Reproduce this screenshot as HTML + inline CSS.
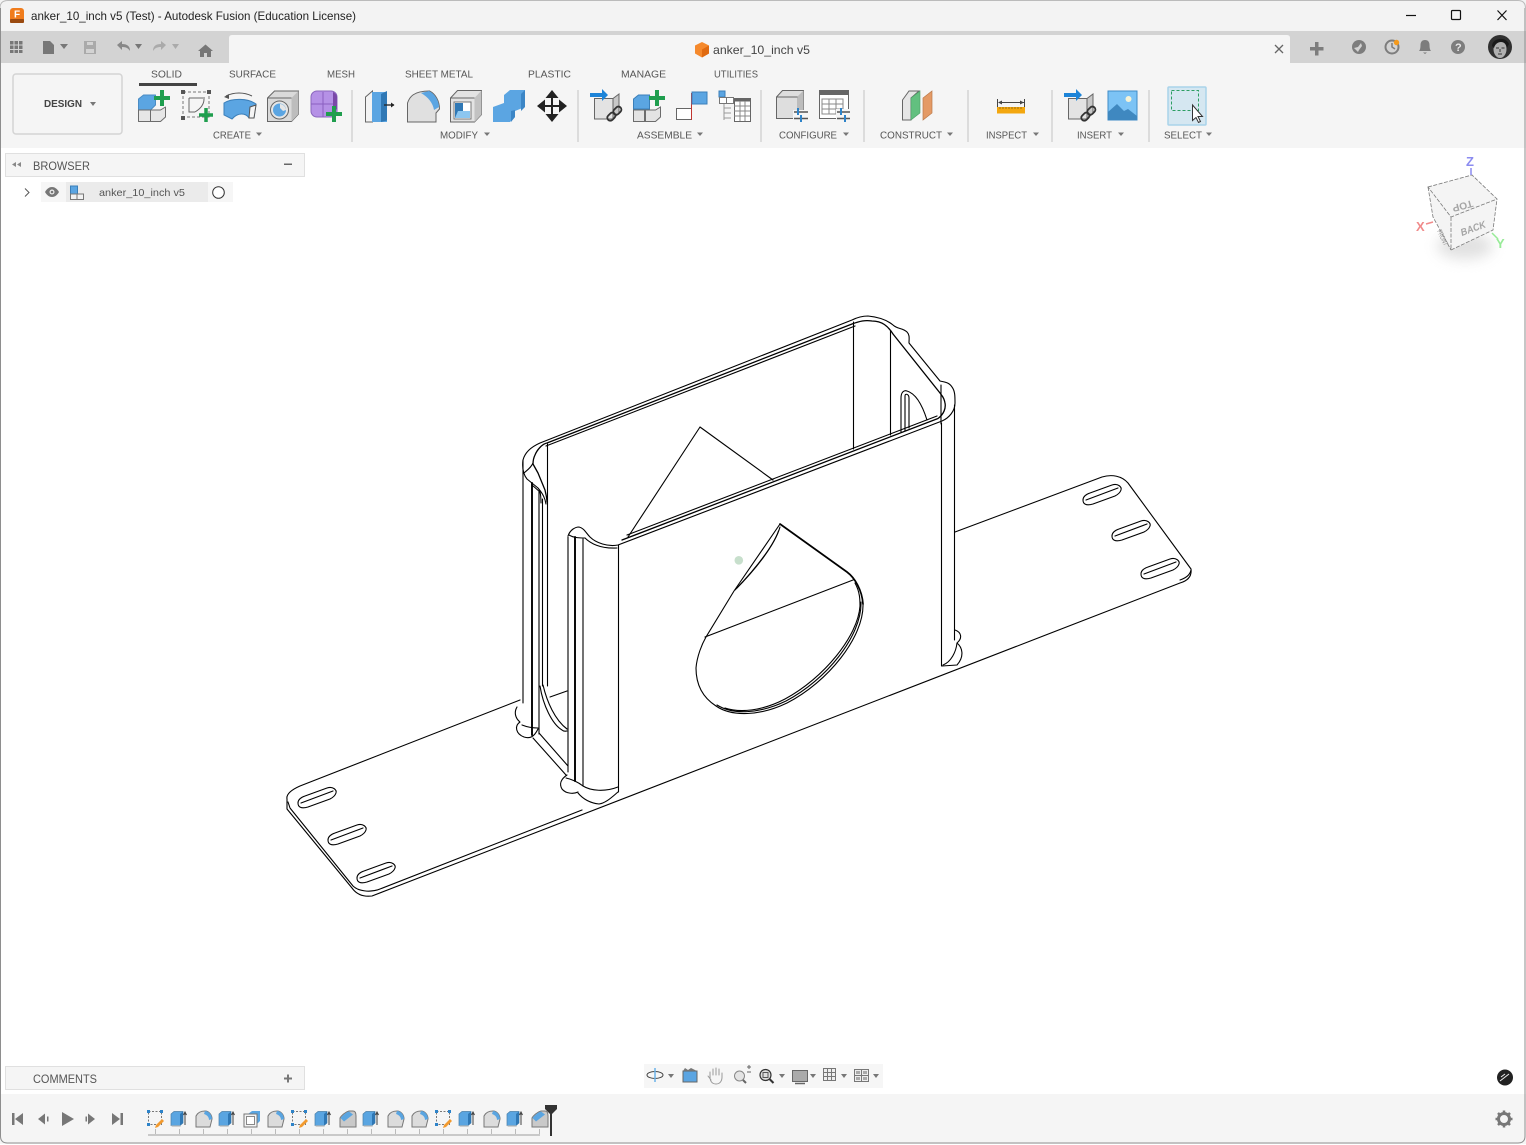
<!DOCTYPE html>
<html><head><meta charset="utf-8"><title>anker_10_inch v5</title>
<style>
html,body{margin:0;padding:0;background:#fff;width:1526px;height:1145px;overflow:hidden}
svg{position:absolute;left:0;top:0;display:block}
text{font-family:"Liberation Sans",sans-serif;fill:#555;font-size:10.5px}
.m path,.m line{fill:none;stroke:#000;stroke-width:1.1;stroke-linejoin:round;stroke-linecap:round}
.m .t{stroke-width:1.9}
.ic{stroke:#6c6c6c;stroke-width:1;stroke-linejoin:round}
</style></head><body>
<svg width="1526" height="1145" viewBox="0 0 1526 1145" xmlns="http://www.w3.org/2000/svg">
<defs>
<filter id="bl" x="-60%" y="-80%" width="220%" height="260%"><feGaussianBlur stdDeviation="7"/></filter>
<symbol id="plus" viewBox="0 0 16 16" overflow="visible"><path d="M6 0h4v6h6v4h-6v6H6v-6H0V6h6z" fill="#1f9e4e"/></symbol>
<symbol id="t-sk" viewBox="0 0 18 18" overflow="visible">
<rect x="1.5" y="1.5" width="13" height="13" fill="none" stroke="#777" stroke-dasharray="2 1.5"/>
<path d="M0 0h3v3H0zM13 0h3v3h-3zM0 13h3v3H0z" fill="#2d83c9"/>
<path d="M9 15l6-6 2 2-6 6-3 1z" fill="#f29a2e"/></symbol>
<symbol id="t-ex" viewBox="0 0 18 18" overflow="visible">
<path d="M1 4l3-2.500h9V13l-3 2.500H1z" fill="#5aa5e1" stroke="#4a7fa8" stroke-width=".7"/>
<path d="M10 4l3-2.500V13l-3 2.500z" fill="#2f78b5"/>
<path d="M1 15.500h9l1 1.500H2z" fill="#cfcfcf"/>
<path d="M15 15V3M13.500 5L15 2l1.500 3" stroke="#444" fill="none"/></symbol>
<symbol id="t-fi" viewBox="0 0 18 18" overflow="visible">
<path d="M1 17V6C3 2 7 1 10 1c4 0 7 4 7 8l-2 8z" fill="#dcdcdc" stroke="#777"/>
<path d="M10 1c4 0 7 4 7 8l-3 1C14 7 12 5 9 4z" fill="#5aa5e1"/></symbol>
<symbol id="t-ch" viewBox="0 0 18 18" overflow="visible">
<path d="M1 17V8C2 6 6 2 10 1h4c2 0 3 2 3 5v11z" fill="#c9c9c9" stroke="#777"/>
<path d="M1.500 8C3 6 7 2 10 1.500l4 3-9 7z" fill="#5aa5e1"/></symbol>
<symbol id="t-bx" viewBox="0 0 18 18" overflow="visible">
<path d="M5 4l4-3h8v10l-3 3z" fill="#5aa5e1"/>
<rect x="1" y="4" width="13" height="13" fill="#f4f4f4" stroke="#777"/>
<rect x="3.500" y="6.500" width="8" height="8" fill="#fff" stroke="#888"/></symbol>
</defs>

<!-- chrome backgrounds -->
<rect width="1526" height="1145" fill="#fff"/>
<rect width="1526" height="31" fill="#f3f3f3"/>
<rect y="31" width="1526" height="32" fill="#d3d3d3"/>
<path d="M229 63V38q0-3 3-3h1055q3 0 3 3v25z" fill="#f5f5f5"/>
<rect y="63" width="1526" height="85" fill="#f5f5f5"/>
<rect y="1094" width="1526" height="50" fill="#f5f5f5"/>
<path d="M.5 8V1136q0 7 7 7H1518q7 0 7-7V8" fill="none" stroke="#8e8e8e"/>
<path d="M0 8Q0 .5 8 .5H1518q7.500 0 7.500 8" fill="none" stroke="#bbb"/>

<!-- title bar -->
<rect x="10" y="8" width="14" height="15" rx="3" fill="#f07c1c"/>
<rect x="10" y="19" width="14" height="4" rx="1" fill="#9a4a10"/>
<text x="14" y="17.500" style="font-size:10px;font-weight:bold;fill:#fff">F</text>
<text x="31" y="20" style="font-size:12px;fill:#222" textLength="325" lengthAdjust="spacingAndGlyphs">anker_10_inch v5 (Test) - Autodesk Fusion (Education License)</text>
<path d="M1406 15.500h10" stroke="#111" stroke-width="1.200"/>
<rect x="1451.500" y="10.500" width="9" height="9" rx="1" fill="none" stroke="#111" stroke-width="1.200"/>
<path d="M1497.500 10.500l9 9.500M1506.500 10.500l-9 9.500" stroke="#111" stroke-width="1.200"/>

<!-- quick access bar -->
<g fill="#777">
<path d="M10 41h3.500v3.500H10zM14.500 41H18v3.500h-3.500zM19 41h3.500v3.500H19zM10 45.500h3.500V49H10zM14.500 45.500H18V49h-3.500zM19 45.500h3.500V49H19zM10 50h3.500v3H10zM14.500 50H18v3h-3.500zM19 50h3.500v3H19z"/>
<path d="M43 41h7l4 4v9H43z"/>
<path d="M60 44h8l-4 5z"/>
<path d="M84 41h12v13H84z" fill="#aaa"/>
<path d="M117 45l5-4v3c5 0 8 2 8 7-2-3-4-4-8-4v3z" fill="#888"/>
<path d="M135 44h7l-3.500 5z"/>
<path d="M166 45l-5-4v3c-5 0-8 2-8 7 2-3 4-4 8-4v3z" fill="#aaa"/>
<path d="M172 44h7l-3.500 5z" fill="#aaa"/>
<path d="M198 51l7.500-6.500L213 51h-2v6h-4v-4h-3v4h-4v-6z"/>
</g>
<rect x="87" y="42" width="6" height="3" fill="#d3d3d3"/><rect x="86" y="49" width="8" height="4" fill="#d3d3d3"/>

<!-- tab bar doc -->
<path d="M702 42l7 3.500v8l-7 4-7-4v-8z" fill="#f5892c"/>
<path d="M702 49.500l7-4v8l-7 4z" fill="#e06a10"/>
<text x="713" y="54" style="font-size:12px;fill:#444" textLength="97" lengthAdjust="spacingAndGlyphs">anker_10_inch v5</text>
<path d="M1275 45l8 8M1283 45l-8 8" stroke="#666" stroke-width="1.300"/>
<path d="M1315 42h3.500v5h5v3.500h-5v5H1315v-5h-5V47h5z" fill="#7d7d7d"/>
<circle cx="1359" cy="47" r="7" fill="#7d7d7d"/><path d="M1354 48l4-1 3-4 1 3-3 4-1 2z" fill="#d3d3d3"/>
<circle cx="1392" cy="47" r="6.500" fill="none" stroke="#7d7d7d" stroke-width="2"/><path d="M1392 43v4l3 2" stroke="#7d7d7d" stroke-width="1.500" fill="none"/><circle cx="1396.500" cy="42.500" r="2.700" fill="#f59a1c"/>
<path d="M1425 40c-3 0-4.500 2-4.500 5 0 3-.5 5-1.500 6h12c-1-1-1.500-3-1.500-6 0-3-1.500-5-4.500-5zM1423 52.500h4l-2 1.500z" fill="#7d7d7d"/>
<circle cx="1458" cy="47" r="7" fill="#7d7d7d"/>
<text x="1455" y="51" style="font-size:11px;font-weight:bold;fill:#e8e8e8">?</text>
<circle cx="1500" cy="47" r="12" fill="#303030"/>
<ellipse cx="1500" cy="49" rx="6.500" ry="9" fill="#b0b0b0"/>
<path d="M1492 46c0-8 14-10 17-2l-2 4c-1-4-3-6-6-6-3 0-6 2-7 6z" fill="#1a1a1a"/>
<path d="M1496 48h3M1501.500 48h3M1498 54h4M1500 49v3" stroke="#333"/>

<!-- design button -->
<rect x="13" y="74" width="109" height="60" rx="3" fill="#f5f5f5" stroke="#d4d4d4" stroke-width="1.500"/>
<text x="44" y="107" style="font-size:10.500px;font-weight:bold;fill:#444" textLength="38" lengthAdjust="spacingAndGlyphs">DESIGN</text>
<path d="M90 102h6l-3 4z" fill="#777"/>

<!-- tabs -->
<g>
<text x="151" y="77.500" textLength="31" lengthAdjust="spacingAndGlyphs">SOLID</text>
<text x="229" y="77.500" textLength="47" lengthAdjust="spacingAndGlyphs">SURFACE</text>
<text x="327" y="77.500" textLength="28" lengthAdjust="spacingAndGlyphs">MESH</text>
<text x="405" y="77.500" textLength="68" lengthAdjust="spacingAndGlyphs">SHEET METAL</text>
<text x="528" y="77.500" textLength="43" lengthAdjust="spacingAndGlyphs">PLASTIC</text>
<text x="621" y="77.500" textLength="45" lengthAdjust="spacingAndGlyphs">MANAGE</text>
<text x="714" y="77.500" textLength="44" lengthAdjust="spacingAndGlyphs">UTILITIES</text>
</g>
<rect x="139" y="83" width="58" height="3" fill="#444"/>

<!-- group labels -->
<g>
<text x="213" y="138.500" textLength="38" lengthAdjust="spacingAndGlyphs">CREATE</text>
<text x="440" y="138.500" textLength="38" lengthAdjust="spacingAndGlyphs">MODIFY</text>
<text x="637" y="138.500" textLength="55" lengthAdjust="spacingAndGlyphs">ASSEMBLE</text>
<text x="779" y="138.500" textLength="58" lengthAdjust="spacingAndGlyphs">CONFIGURE</text>
<text x="880" y="138.500" textLength="62" lengthAdjust="spacingAndGlyphs">CONSTRUCT</text>
<text x="986" y="138.500" textLength="41" lengthAdjust="spacingAndGlyphs">INSPECT</text>
<text x="1077" y="138.500" textLength="35" lengthAdjust="spacingAndGlyphs">INSERT</text>
<text x="1164" y="138.500" textLength="38" lengthAdjust="spacingAndGlyphs">SELECT</text>
</g>
<g fill="#777">
<path d="M256 132.500h6l-3 3.500zM484 132.500h6l-3 3.500zM697 132.500h6l-3 3.500zM843 132.500h6l-3 3.500zM947 132.500h6l-3 3.500zM1033 132.500h6l-3 3.500zM1118 132.500h6l-3 3.500zM1206 132.500h6l-3 3.500z"/>
</g>
<g fill="#dcdcdc">
<rect x="351" y="90" width="2" height="52"/><rect x="577" y="90" width="2" height="52"/><rect x="760" y="90" width="2" height="52"/><rect x="863" y="90" width="2" height="52"/><rect x="967" y="90" width="2" height="52"/><rect x="1051" y="90" width="2" height="52"/><rect x="1148" y="90" width="2" height="52"/>
</g>

<!-- CREATE icons -->
<g class="ic">
<path d="M138.500 99l5-4h12v10l-5 5h-12z" fill="#5ba5e2" stroke="#4a8cc4"/>
<path d="M138.500 110h12v11.500h-12z" fill="#e6e6e6"/><path d="M150.500 110h10l5-3v10l-5 4.500h-10z" fill="#e6e6e6"/>
</g>
<use href="#plus" x="154" y="90" width="16" height="16"/>
<path d="M183 92h26v25h-26z" fill="none" stroke="#777" stroke-dasharray="3 2"/>
<path d="M181 90h4v4h-4zM207 90h4v4h-4zM181 116h4v4h-4z" fill="#555"/>
<path d="M189 98h16M189 98v14h6M204 99c0 6-4 10-9 13" fill="none" stroke="#666"/>
<use href="#plus" x="199" y="108" width="14" height="14"/>
<path d="M224 103C232 98 248 98 256 104L254 118H249C246 113 238 112 232 119L224 115Z" fill="#5ba5e2" stroke="#3b7fb9"/>
<path d="M249 118h5l2-13-6 2z" fill="#f5f5f5" stroke="#555"/>
<path d="M226 96c8-4 18-4 26 0" fill="none" stroke="#555"/><path d="M224 97l5-3v5z" fill="#555"/>
<path d="M267.500 98l7-7h24v23l-7 7.500h-24z" fill="#dadada" stroke="#666"/>
<path d="M291.500 98l7-7v23l-7 7.500z" fill="#bdbdbd"/><path d="M267.500 98h24" stroke="#666"/>
<circle cx="279.500" cy="110" r="9" fill="#e6e6e6" stroke="#666"/>
<circle cx="279.500" cy="110" r="6.500" fill="#5ba5e2"/>
<path d="M280 104a6.500 6.500 0 0 1 6 6l-3 1-3-3z" fill="#e6e6e6"/>
<rect x="311" y="91" width="26" height="26" rx="6" fill="#b591e6" stroke="#8a66bd"/>
<path d="M323 92v25M311 104h24" stroke="#8a5fc0"/>
<path d="M333 92c2 1 4 3 4 5v12l-4 3z" fill="#7a48a8"/>
<use href="#plus" x="326" y="106" width="16" height="16"/>

<!-- MODIFY icons -->
<path d="M365.500 97l7-6v31h-7z" fill="#f3f3f3" stroke="#666"/>
<path d="M372 92h15v30h-15z" fill="#5ba5e2"/><path d="M381 122l6-1.500V91l-6 3z" fill="#2f78b5"/>
<path d="M384 105h10" stroke="#222" stroke-width="1.300"/><path d="M391 102.500l3.500 2.500-3.500 2.500z" fill="#222"/>
<path d="M407.500 122V103c2-6 6-12 22-12 6 3 10 10 10 18l-3.500 4v9z" fill="#e0e0e0" stroke="#666"/>
<path d="M421 93l8-2c6 3 10 10 10 16l-5 3c-1-7-6-13-13-17z" fill="#5ba5e2"/>
<path d="M450.500 98l7-7.500h24v24l-7 7.500h-24z" fill="#e3e3e3" stroke="#666"/>
<path d="M474.500 98l7-7.500v24l-7 7.500z" fill="#c2c2c2"/><path d="M450.500 98h24" stroke="#666"/>
<rect x="454" y="102" width="17" height="17" fill="#fff" stroke="#777"/>
<path d="M455 103h8v8h7v7h-15z" fill="#2f78b5"/><path d="M458 111h12v7h-15z" fill="#8cc6f0"/>
<path d="M493 107L504 103V95L510 90H525V107L515 111V117L510 122H493Z" fill="#5ba5e2"/>
<path d="M521 94l4-4v17l-4 4zM511 111l4-1v7l-4 5z" fill="#3c86c6"/>
<path d="M552 94V118M541 106H563" stroke="#222" stroke-width="2"/>
<path d="M552 90l6.500 8h-13zM552 122l6.500-8h-13zM537 106l8-6.500v13zM567 106l-8-6.500v13z" fill="#222"/>

<!-- ASSEMBLE icons -->
<path d="M594.500 98.500H613V119H594.500Z" fill="#e3e3e3" stroke="#666"/>
<path d="M613 98.500l6-4.500V113l-6 6z" fill="#c8c8c8" stroke="#666"/>
<path d="M590 93h12v-4l6 6-6 6v-4h-12z" fill="#1d84d8"/>
<g fill="none" stroke="#333" stroke-width="1.800"><rect x="607" y="114" width="9" height="6" rx="3" transform="rotate(-45 611 117)"/><rect x="613" y="108" width="9" height="6" rx="3" transform="rotate(-45 617 111)"/></g>
<path d="M633.500 99l5-4h11v14h-16z" fill="#5ba5e2" stroke="#3b7fb9"/><path d="M633.500 110h11v11.500h-11z" fill="#e3e3e3" stroke="#6c6c6c"/><path d="M645.500 110h10l5-3v10l-5 4.500h-10z" fill="#e3e3e3" stroke="#6c6c6c"/>
<use href="#plus" x="649" y="90" width="16" height="16"/>
<rect x="676.500" y="108.500" width="15" height="11" fill="#fff" stroke="#666"/><path d="M691.500 93v27" stroke="#c0352f"/><rect x="692" y="92" width="15" height="12" fill="#5ba5e2" stroke="#3b7fb9"/>
<rect x="719" y="91" width="6" height="6" fill="#5ba5e2" stroke="#3b7fb9"/><rect x="719.500" y="97.500" width="7" height="6" fill="#fff" stroke="#777"/><rect x="726.500" y="97.500" width="7" height="6" fill="#fff" stroke="#777"/>
<path d="M724 104v16M724 108h7M724 113h7M724 118h7" stroke="#999" fill="none"/>
<rect x="734.500" y="98.500" width="16" height="23" fill="#fff" stroke="#666"/><rect x="734" y="98" width="17" height="3.500" fill="#666"/><path d="M734 106h16M734 111h16M734 116h16M740 101v20M745 101v20" stroke="#888"/>

<!-- CONFIGURE icons -->
<path d="M776.500 97l6-6.500h21v28h-27z" fill="#dedede" stroke="#666"/><path d="M797 97l6.500-6.500v21l-6.500 3z" fill="#bcbcbc"/><path d="M776.500 97h21" stroke="#666"/>
<rect x="793" y="110" width="16" height="13" fill="#f5f5f5"/>
<path d="M794 112h14M794 118.500h14" stroke="#555" stroke-width="1.500"/><path d="M798 108v7M801 115v7" stroke="#2d83c9" stroke-width="2"/>
<rect x="819.500" y="90.500" width="29" height="28" fill="#fff" stroke="#666"/><rect x="819" y="90" width="30" height="5" fill="#666"/>
<path d="M822 99h21v15h-21zM822 104h21M822 109h21M829 99v15M836 99v15" fill="none" stroke="#888"/>
<rect x="836" y="109" width="15" height="14" fill="#f5f5f5"/>
<path d="M837 112h13M837 118.500h13" stroke="#555" stroke-width="1.500"/><path d="M841 108v7M845 115v7" stroke="#2d83c9" stroke-width="2"/>

<!-- CONSTRUCT -->
<path d="M902.500 100L909 91H919L911 98V120H902.500Z" fill="#e6e6e6" stroke="#666"/>
<path d="M911 98L920 91V113L911 120Z" fill="#62c07f" stroke="#4d9e68" stroke-width=".6"/>
<path d="M923 98L932 91V113L923 120Z" fill="#e49a65" stroke="#bb7a4a" stroke-width=".7"/>

<!-- INSPECT -->
<path d="M997.500 99v8M1024.500 99v8M999 102.500h25" stroke="#444" fill="none"/><path d="M998 102.500l4-2v4zM1024 102.500l-4-2v4z" fill="#444"/>
<rect x="997" y="107" width="28" height="6.500" fill="#f3a70f"/><path d="M1000 107v2M1003 107v2M1006 107v2M1009 107v2M1012 107v2M1015 107v2M1018 107v2M1021 107v2" stroke="#7a5a10" stroke-width=".7"/>

<!-- INSERT -->
<path d="M1068.500 98.500H1087V119H1068.500Z" fill="#e3e3e3" stroke="#666"/><path d="M1087 98.500l6-4.500V113l-6 6z" fill="#c8c8c8" stroke="#666"/>
<path d="M1064 93h12v-4l6 6-6 6v-4h-12z" fill="#1d84d8"/>
<g fill="none" stroke="#333" stroke-width="1.800"><rect x="1081" y="114" width="9" height="6" rx="3" transform="rotate(-45 1085 117)"/><rect x="1087" y="108" width="9" height="6" rx="3" transform="rotate(-45 1091 111)"/></g>
<rect x="1108" y="91" width="29" height="29" fill="#7cc3f5" stroke="#3f8cc8"/>
<circle cx="1128.500" cy="99" r="3" fill="#f6f3d6"/>
<path d="M1108 112l9-8 7 7 4-2 9 7v4h-29z" fill="#3f88c0"/>

<!-- SELECT -->
<rect x="1168" y="87" width="38" height="38" rx="1" fill="#d5e7f1" stroke="#a9d3ea" stroke-width="1.500"/>
<rect x="1171.500" y="90.500" width="27" height="20" fill="none" stroke="#2c9e62" stroke-dasharray="3 2"/>
<path d="M1192.500 105v15.500l3.500-3 2.500 5 2-1-2.500-5h4.500z" fill="#fff" stroke="#333"/>

<!-- browser -->
<rect x="5.500" y="153.500" width="299" height="23" fill="#f5f5f5" stroke="#e0e0e0"/>
<path d="M16 162v5l-4-2.500zM21 162v5l-4-2.500z" fill="#888"/>
<text x="33" y="170" style="font-size:12px;fill:#555" textLength="57" lengthAdjust="spacingAndGlyphs">BROWSER</text>
<rect x="284" y="163.500" width="8" height="1.500" fill="#666"/>
<path d="M25 188.500l4 4-4 4" fill="none" stroke="#555"/>
<rect x="41" y="182" width="192" height="20" fill="#f6f6f6"/>
<rect x="66" y="182" width="142" height="20" fill="#ebebeb"/>
<path d="M45 192c2-3.500 4.500-5 7-5s5 1.500 7 5c-2 3.500-4.500 5-7 5s-5-1.500-7-5z" fill="#777"/><circle cx="52" cy="192" r="2.500" fill="#eee"/><circle cx="52" cy="192" r="1.300" fill="#777"/>
<rect x="70.500" y="186" width="7" height="8" fill="#5ba5e2" stroke="#3b7fb9"/>
<rect x="70.500" y="194" width="6.500" height="5.500" fill="#f2f2f2" stroke="#777"/><rect x="77" y="194" width="6.500" height="5.500" fill="#f2f2f2" stroke="#777"/>
<text x="99" y="196" style="font-size:10.500px;fill:#555" textLength="86" lengthAdjust="spacingAndGlyphs">anker_10_inch v5</text>
<circle cx="218.500" cy="192.500" r="5.800" fill="#fff" stroke="#333"/>

<!-- viewcube -->
<ellipse cx="1465" cy="246" rx="28" ry="13" fill="#bbb" opacity=".45" filter="url(#bl)"/>
<path d="M1428 187L1472 175 1497 199 1493 230 1452 250 1433 217z" fill="#f4f4f4"/>
<g fill="none" stroke="#7a7a7a" stroke-width=".8" stroke-dasharray="4 1.500">
<path d="M1428 187L1472 175 1497 199 1451 217z"/><path d="M1451 217V250L1493 230 1497 199"/><path d="M1428 187L1433 217 1451 250"/>
</g>
<text transform="translate(1472 200) rotate(165)" style="font-size:10px;font-weight:bold;fill:#a5a5a5" textLength="21" lengthAdjust="spacingAndGlyphs">TOP</text>
<text transform="translate(1462 236) rotate(-20)" style="font-size:10px;font-weight:bold;font-style:italic;fill:#a5a5a5" textLength="26" lengthAdjust="spacingAndGlyphs">BACK</text>
<text transform="translate(1437 231) rotate(65) scale(.7 1)" style="font-size:7px;fill:#8e8e8e">FRONT</text>
<text x="1466" y="166" style="font-size:13px;font-weight:bold;fill:#8b8bf0">Z</text>
<path d="M1471 168v7" stroke="#8b8bf0" stroke-width="1.500"/>
<text x="1416" y="231" style="font-size:13px;font-weight:bold;fill:#f08b8b">X</text>
<path d="M1426 224l7-2" stroke="#f08b8b" stroke-width="1.500"/>
<text x="1496" y="248" style="font-size:13px;font-weight:bold;fill:#97eb97">Y</text>
<path d="M1492 233l6 6" stroke="#97eb97" stroke-width="1.500"/>

<!-- MODEL -->
<circle cx="738.800" cy="560.300" r="4.300" fill="#c7dfcc"/>
<g class="m">
<!-- plate -->
<path d="M520 700L300 786C291 790 286 794 287 799L287 809 352 888C357 895 364 897 372 896L1180 583C1187 581 1192 577 1191 569L1128 483C1122 476 1112 474 1102 477L955 532"/>
<path d="M288 802L290 808 353 886C358 891 370 893 380 889L582 810"/>
<path d="M1191 570C1190 575 1186 578 1180 580"/>
<path d="M550 697L567 691"/>
<!-- slots -->
<path d="M298 803C298 799 302 797 305 796L327 788C333 786 337 790 336 793 335 796 332 798 330 799L308 807C301 809 298 807 298 803Z"/>
<path d="M301 803L333 791"/>
<path d="M328 840C328 836 332 834 335 833L357 825C363 823 367 827 366 830 365 833 362 835 360 836L338 844C331 846 328 844 328 840Z"/>
<path d="M331 840L363 828"/>
<path d="M357 878C357 874 361 872 364 871L386 863C392 861 396 865 395 868 394 871 391 873 389 874L367 882C360 884 357 882 357 878Z"/>
<path d="M360 878L392 866"/>
<path d="M1083 500C1083 496 1087 494 1090 493L1112 485C1118 483 1122 487 1121 490 1120 493 1117 495 1115 496L1093 504C1086 506 1083 504 1083 500Z"/>
<path d="M1086 500L1118 488"/>
<path d="M1112 536C1112 532 1116 530 1119 529L1141 521C1147 519 1151 523 1150 526 1149 529 1146 531 1144 532L1122 540C1115 542 1112 540 1112 536Z"/>
<path d="M1115 536L1147 524"/>
<path d="M1141 574C1141 570 1145 568 1148 567L1170 559C1176 557 1180 561 1179 564 1178 567 1175 569 1173 570L1151 578C1144 580 1141 578 1141 574Z"/>
<path d="M1144 574L1176 562"/>
<!-- rim outer -->
<path d="M568 536C570 530 575 527 579 527 584 528 586 533 590 537 596 543 608 547 618 545L942 421C949 418 955 411 955 403 955 396 955 391 952 387 949 382 944 382 940 381L909 343C909 339 910 335 907 332 903 328 897 329 893 325 887 320 878 317 868 316 862 316 858 317 852 320L540 443C531 447 525 452 523 460 522 468 523 474 527 479L538 488C543 494 545 498 546 504"/>
<!-- rim inner -->
<path d="M622 540L938 418.500C944 414 946 408 945 403 944 397 942 396 940 393L893 334C888 326 882 321 872 321 865 320 860 321 852 324L547 443C542 444 537 450 535 455 533 459 533 462 533 464L538 473 545 490C546 495 547 498 547 502" style="stroke-width:1.300"/>
<path d="M627 535L937 416M855 326L546 446M585 538C590 543 600 549 617 548"/>
<path d="M569 535C574 538 580 538 585 538"/>
<path d="M533 463C531 468 526 471 524 473"/>
<path d="M532 485L540 492C541 496 541 499 541 503"/>
<!-- verticals -->
<path d="M523 460V703"/>
<path class="t" d="M532 483V735"/>
<path d="M539 491V734M542.500 499V686M547.500 444V686"/>
<path d="M568 537V772"/>
<path class="t" d="M575 537V781"/>
<path d="M583 539V786M618.500 545V792"/>
<path d="M941.500 423V666M954.500 405V640M941 385V424"/>
<path d="M853.500 322V449M890.500 331V435"/>
<!-- back slot -->
<path d="M901 432V398C901 392 904 390 907 391 914 393 921 401 927 420"/>
<path d="M905 431V396C905 393 909 394 909 398V428"/>
<!-- triangle -->
<path d="M628 537L700 427 773 480"/>
<!-- left base -->
<path d="M540 686C543 705 552 724 562 730 564 732 566 731 567 731"/>
<path d="M543 685C547 702 555 720 567 729"/>
<path d="M517 707C514 712 515 718 520 722 514 726 516 734 524 737 530 739 534 737 538 729"/>
<path d="M522 725C527 727 534 728 538 728"/>
<path d="M533 738L566 775M539 733L568 766"/>
<path d="M567 775C561 779 559 784 562 789 566 794 574 794 578 792"/>
<path d="M566 778C571 779 578 782 583 786"/>
<path d="M578 793C583 799 590 803 599 804 606 803 612 797 618 792"/>
<path d="M583 786C591 791 605 792 618 787"/>
<!-- right base -->
<path d="M955 630C961 632 963 638 957 643 962 647 965 656 957 665L942 666"/>
<path d="M957 643C956 652 951 662 943 665"/>
<!-- teardrop -->
<path class="t" d="M780 524L847 572C855 578 862 590 863 604" style="stroke-width:1.700"/>
<path d="M863 604C864 637 828 682 787 703 760 716 732 717 716 706 702 697 696 684 696 668 697 656 702 644 706 637L734 591 780 524"/>
<path d="M861 602C862 636 826 680 786 701 759 714 733 715 717 705"/>
<path d="M855 583C860 592 860 600 860 606 858 636 824 678 785 699 762 711 740 713 725 708"/>
<path d="M780 527C775 545 755 570 735 590"/>
<path d="M778.500 531C772 549 752 572 737 588"/>
<path d="M705 637L853 580"/>
</g>

<!-- comments -->
<rect x="5.500" y="1066.500" width="299" height="23" fill="#f5f5f5" stroke="#e0e0e0"/>
<text x="33" y="1083" style="font-size:12px;fill:#555" textLength="64" lengthAdjust="spacingAndGlyphs">COMMENTS</text>
<path d="M287 1074.500h2v3h3v2h-3v3h-2v-3h-3v-2h3z" fill="#777"/>

<!-- nav bar -->
<rect x="644" y="1064" width="239" height="24" fill="#f6f6f6"/>
<g fill="#777">
<path d="M668 1074h6l-3 4zM779 1074h6l-3 4zM810 1074h6l-3 4zM841 1074h6l-3 4zM873 1074h6l-3 4z"/>
</g>
<ellipse cx="655" cy="1075" rx="8" ry="3.500" fill="none" stroke="#444"/><path d="M655 1068v14" stroke="#6ab2e8" stroke-width="1.500"/>
<rect x="683" y="1071" width="14" height="11" fill="#5ba5e2" stroke="#666"/><path d="M683 1071l2-3 3 2 3-2 6 3z" fill="#777"/>
<path d="M710 1077v-5M713 1075v-6M716 1075v-7M719 1075v-6M722 1077v-4M710 1077c0 4 2 7 6 7 4 0 6-3 6-7M708 1076l3 4" fill="none" stroke="#999" stroke-linecap="round"/>
<circle cx="739.500" cy="1076" r="5" fill="#e4e4e4" stroke="#888"/><path d="M743 1080l3 3" stroke="#666" stroke-width="2"/><path d="M747 1067h4M749 1065v4M747 1072h4" stroke="#666"/>
<circle cx="765.500" cy="1075" r="5.500" fill="#ddd" stroke="#333" stroke-width="1.200"/><rect x="763" y="1072.500" width="5" height="5" fill="none" stroke="#555"/><path d="M769.500 1079l4 4" stroke="#333" stroke-width="2"/>
<rect x="792.500" y="1070.500" width="15" height="11" fill="#aaa" stroke="#666"/><path d="M795 1083.500h10" stroke="#666" stroke-width="1.500"/>
<path d="M823.500 1068.500h12v12h-12zM823.500 1072.500h12M823.500 1076.500h12M827.500 1068.500v12M831.500 1068.500v12" fill="#eee" stroke="#777"/>
<rect x="854.500" y="1069.500" width="14" height="12" fill="#eee" stroke="#777"/><path d="M861.500 1069.500v12M854.500 1075.500h14" stroke="#777"/><path d="M856 1071h4v3h-4zM863 1071h4v3h-4zM856 1077h4v3h-4zM863 1077h4v3h-4z" fill="#aaa"/>
<circle cx="1505" cy="1077.500" r="8" fill="#222"/><path d="M1500 1081l9-7M1501 1077l4-3" stroke="#eee" stroke-width="1"/>

<!-- timeline -->
<g fill="#777">
<path d="M12 1113h2.500v12H12zM23 1113v12l-8-6z"/>
<path d="M45 1113.500v11l-7-5.500zM47 1116.500h1.500v5H47z"/>
<path d="M62 1112v14l12-7z"/>
<path d="M88 1113.500v11l7-5.500zM85.500 1116.500H87v5h-1.500z"/>
<path d="M112 1113v12l8-6zM120.500 1113h2.500v12h-2.500z"/>
</g>
<use href="#t-sk" x="147" y="1110" width="18" height="18"/>
<use href="#t-ex" x="170" y="1110" width="18" height="18"/>
<use href="#t-fi" x="195" y="1110" width="18" height="18"/>
<use href="#t-ex" x="218" y="1110" width="18" height="18"/>
<use href="#t-bx" x="243" y="1110" width="18" height="18"/>
<use href="#t-fi" x="267" y="1110" width="18" height="18"/>
<use href="#t-sk" x="291" y="1110" width="18" height="18"/>
<use href="#t-ex" x="314" y="1110" width="18" height="18"/>
<use href="#t-ch" x="339" y="1110" width="18" height="18"/>
<use href="#t-ex" x="362" y="1110" width="18" height="18"/>
<use href="#t-fi" x="387" y="1110" width="18" height="18"/>
<use href="#t-fi" x="411" y="1110" width="18" height="18"/>
<use href="#t-sk" x="435" y="1110" width="18" height="18"/>
<use href="#t-ex" x="458" y="1110" width="18" height="18"/>
<use href="#t-fi" x="483" y="1110" width="18" height="18"/>
<use href="#t-ex" x="506" y="1110" width="18" height="18"/>
<use href="#t-ch" x="531" y="1110" width="18" height="18"/>
<rect x="148" y="1134" width="392" height="2" fill="#c9c9c9"/>
<path d="M155.500 1129v5M179.500 1129v5M203.500 1129v5M227.500 1129v5M251.500 1129v5M275.500 1129v5M299.500 1129v5M323.500 1129v5M347.500 1129v5M371.500 1129v5M395.500 1129v5M419.500 1129v5M443.500 1129v5M467.500 1129v5M491.500 1129v5M515.500 1129v5M539.500 1129v5" stroke="#bbb"/>
<path d="M545 1105h12v4l-6 6-6-6z" fill="#333"/><rect x="550" y="1112" width="2" height="24" fill="#333"/>
<!-- gear -->
<circle cx="1504" cy="1119" r="5.500" fill="none" stroke="#777" stroke-width="3"/>
<path d="M1504 1110.500v3M1504 1124.500v3M1495.500 1119h3M1509.500 1119h3M1498 1113l2 2M1508 1123l2 2M1510 1113l-2 2M1500 1123l-2 2" stroke="#777" stroke-width="2.500"/>
</svg>
</body></html>
